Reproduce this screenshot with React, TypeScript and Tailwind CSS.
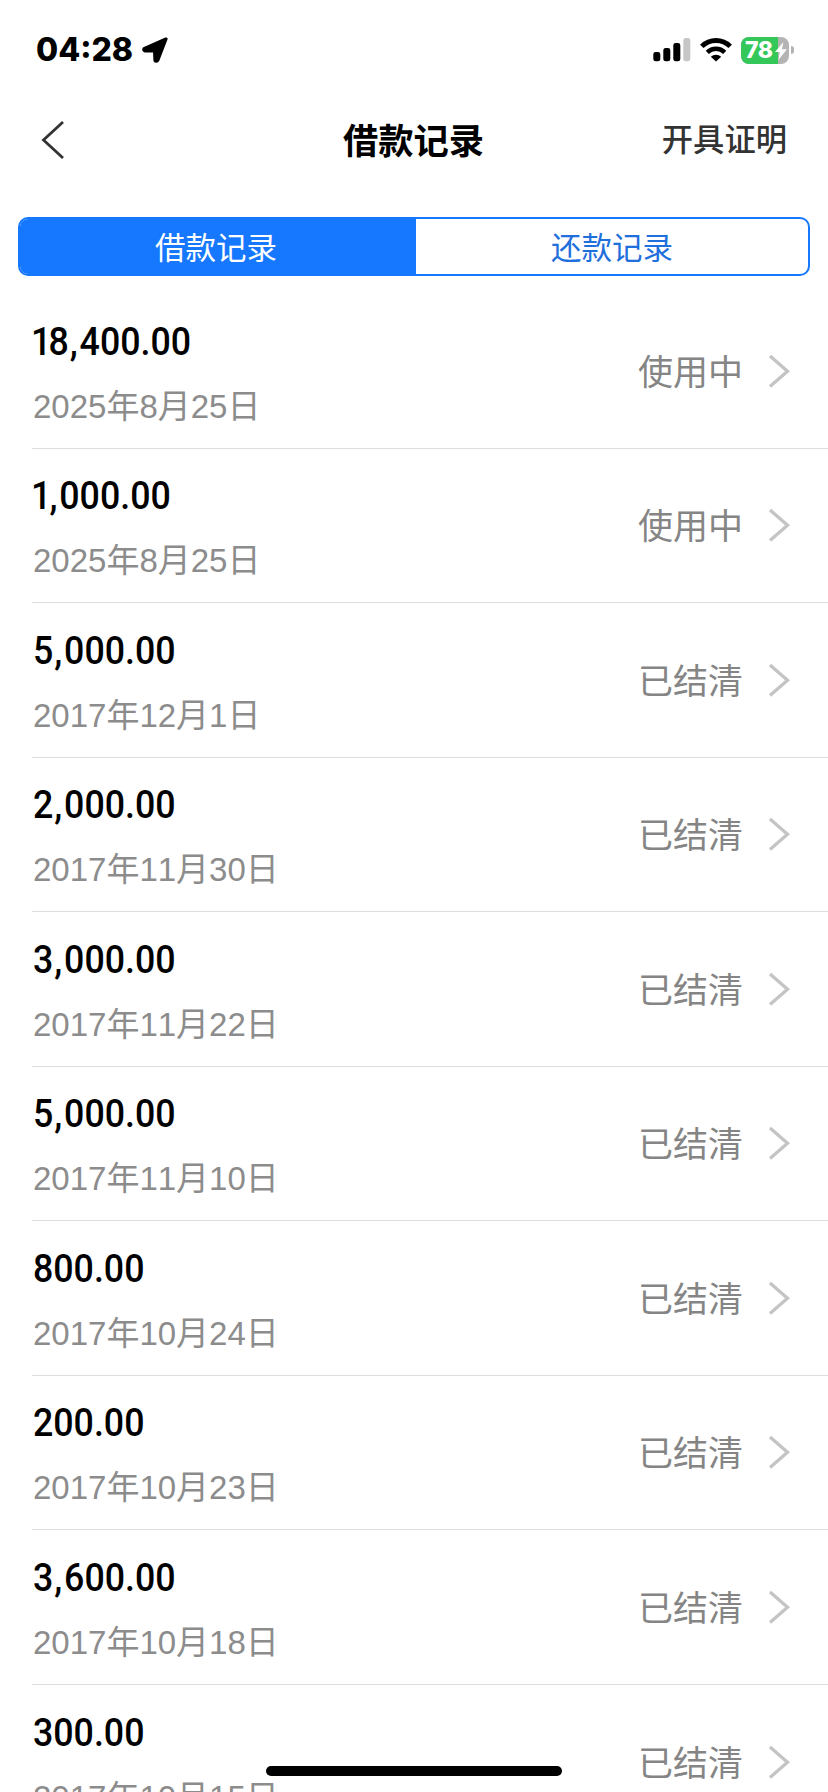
import { Fragment } from "react";
import clsx from "clsx";

type LoanRecord = {
  amount: string;
  date: string;
  status: "使用中" | "已结清";
};

const records: LoanRecord[] = [
  { amount: "18,400.00", date: "2025年8月25日", status: "使用中" },
  { amount: "1,000.00", date: "2025年8月25日", status: "使用中" },
  { amount: "5,000.00", date: "2017年12月1日", status: "已结清" },
  { amount: "2,000.00", date: "2017年11月30日", status: "已结清" },
  { amount: "3,000.00", date: "2017年11月22日", status: "已结清" },
  { amount: "5,000.00", date: "2017年11月10日", status: "已结清" },
  { amount: "800.00", date: "2017年10月24日", status: "已结清" },
  { amount: "200.00", date: "2017年10月23日", status: "已结清" },
  { amount: "3,600.00", date: "2017年10月18日", status: "已结清" },
  { amount: "300.00", date: "2017年10月15日", status: "已结清" },
];

function StatusBar() {
  return (
    <div className="flex h-[100px] items-center pr-[34px] pl-9">
      <span className="w-[98px] font-['Inter',sans-serif] text-[32px] leading-none font-extrabold whitespace-nowrap">
        04:28
      </span>
      {/* 定位箭头 */}
      <svg className="ml-2 h-[26px] w-[26px]" viewBox="0 0 26 26">
        <path
          d="M24 2 L2 11.6 Q1.4 13.6 3 13.8 L12.6 14 L13 23.4 Q14 25.2 15.8 23.2 Z"
          stroke="#000"
          strokeWidth="3.2"
          strokeLinejoin="round"
        />
      </svg>

      <svg className="ml-auto h-6 w-[38px]" viewBox="0 0 38 24">
        <rect x="0.3" y="14" width="7" height="9.3" rx="2.4" />
        <rect x="10.3" y="10" width="7" height="13.3" rx="2.4" />
        <rect x="20.3" y="5" width="7" height="18.3" rx="2.4" />
        <rect x="30.3" y="0" width="7" height="23.3" rx="2.4" fill="#c6c6c6" />
      </svg>
      <svg className="ml-[9px] h-6 w-8" viewBox="0 0 32 24">
        <path d="M1.8 8.4 A20 20 0 0 1 30.2 8.4" fill="none" stroke="#000" strokeWidth="4.8" />
        <path d="M7.3 14.4 A12.3 12.3 0 0 1 24.7 14.4" fill="none" stroke="#000" strokeWidth="4.5" />
        <path d="M16 23.6 L10.8 18.8 A7.4 7.4 0 0 1 21.2 18.8 Z" />
      </svg>

      {/* 电池 78%，充电中 */}
      <div className="ml-[9px] flex items-center">
        <div className="relative flex h-[27px] w-12 items-center overflow-hidden rounded-[8px] bg-[#b4b4b4]">
          <div className="absolute inset-y-0 left-0 w-[37px] bg-[#34c759]" />
          <span className="relative ml-1 font-['Inter',sans-serif] text-[23px] leading-none font-extrabold tracking-[-0.5px] text-white">
            78
          </span>
          <svg className="absolute top-[5px] left-[34px] h-[18px] w-[12px]" viewBox="0 0 12 18">
            <path d="M8.4 0 L0 10 H4.8 L3.4 18 L12 7.2 H7 Z" fill="#fff" />
          </svg>
        </div>
        <div className="ml-0.5 h-2 w-[3px] rounded-r-full bg-[#b4b4b4]" />
      </div>
    </div>
  );
}

function NavBar() {
  return (
    <div className="grid h-20 grid-cols-[1fr_auto_1fr] items-center pr-[41px] pl-10">
      <svg className="h-10 w-6" viewBox="0 0 24 40" fill="none">
        <path d="M23 2 L3.5 20 L23 38" stroke="#333" strokeWidth="2.8" />
      </svg>
      <h1 className="pt-[3px] text-[35.3px] leading-none font-bold">借款记录</h1>
      <span className="justify-self-end pt-0.5 text-[31.3px] leading-none font-medium text-[#333]">
        开具证明
      </span>
    </div>
  );
}

function Tabs() {
  return (
    <div className="mx-[18px] mt-[37px] flex h-[59px] overflow-hidden rounded-[10px] border-2 border-[#1677ff] text-[30.5px] leading-none">
      <div className="flex w-[396px] items-center justify-center bg-[#1677ff] pt-[3px] pr-1 text-white">
        借款记录
      </div>
      <div className="flex flex-1 items-center justify-center pt-[3px] text-[#1f6fdc]">
        还款记录
      </div>
    </div>
  );
}

function Amount({ value }: { value: string }) {
  const parts = value.split(",");
  return (
    <div
      className={clsx(
        "origin-left scale-x-94 self-start font-['Roboto',sans-serif] text-[38px] leading-[44px] font-medium",
        // 首位的 1 字形较窄，收紧两侧
        value.startsWith("1") && "-ml-0.5 first-letter:tracking-[-3px]"
      )}
    >
      {parts.map((part, i) => (
        <Fragment key={i}>
          {i > 0 && <span className="mr-[2px] ml-px">,</span>}
          {part}
        </Fragment>
      ))}
    </div>
  );
}

function RecordRow({ record, last }: { record: LoanRecord; last: boolean }) {
  return (
    <li
      className={clsx(
        "ml-8 flex h-[154.5px] items-center pr-[37px]",
        !last && "border-b border-[#dedede]"
      )}
    >
      <div className="flex flex-col pt-[5px] pl-px">
        <Amount value={record.amount} />
        <div className="mt-[23px] text-[33px] leading-10 text-[#8c8c8c] [font-kerning:none]">
          {record.date}
        </div>
      </div>
      <span className="ml-auto pt-[3px] text-[35px] leading-none text-[#858585]">
        {record.status}
      </span>
      <svg className="ml-6 h-9 w-6" viewBox="0 0 24 36" fill="none">
        <path d="M3 3 L20.5 18.3 L3 33.5" stroke="#c4c4c4" strokeWidth="3.3" />
      </svg>
    </li>
  );
}

export default function App() {
  return (
    <div className="relative h-[1792px] w-[828px] overflow-hidden bg-white font-['Liberation_Sans','Noto_Sans_CJK_SC',sans-serif] text-black">
      <StatusBar />
      <NavBar />
      <Tabs />
      <ul className="mt-[18px]">
        {records.map((record, i) => (
          <RecordRow key={i} record={record} last={i === records.length - 1} />
        ))}
      </ul>
      {/* 底部横条 */}
      <div className="absolute bottom-4 left-[266px] h-2.5 w-[296px] rounded-full bg-black" />
    </div>
  );
}
